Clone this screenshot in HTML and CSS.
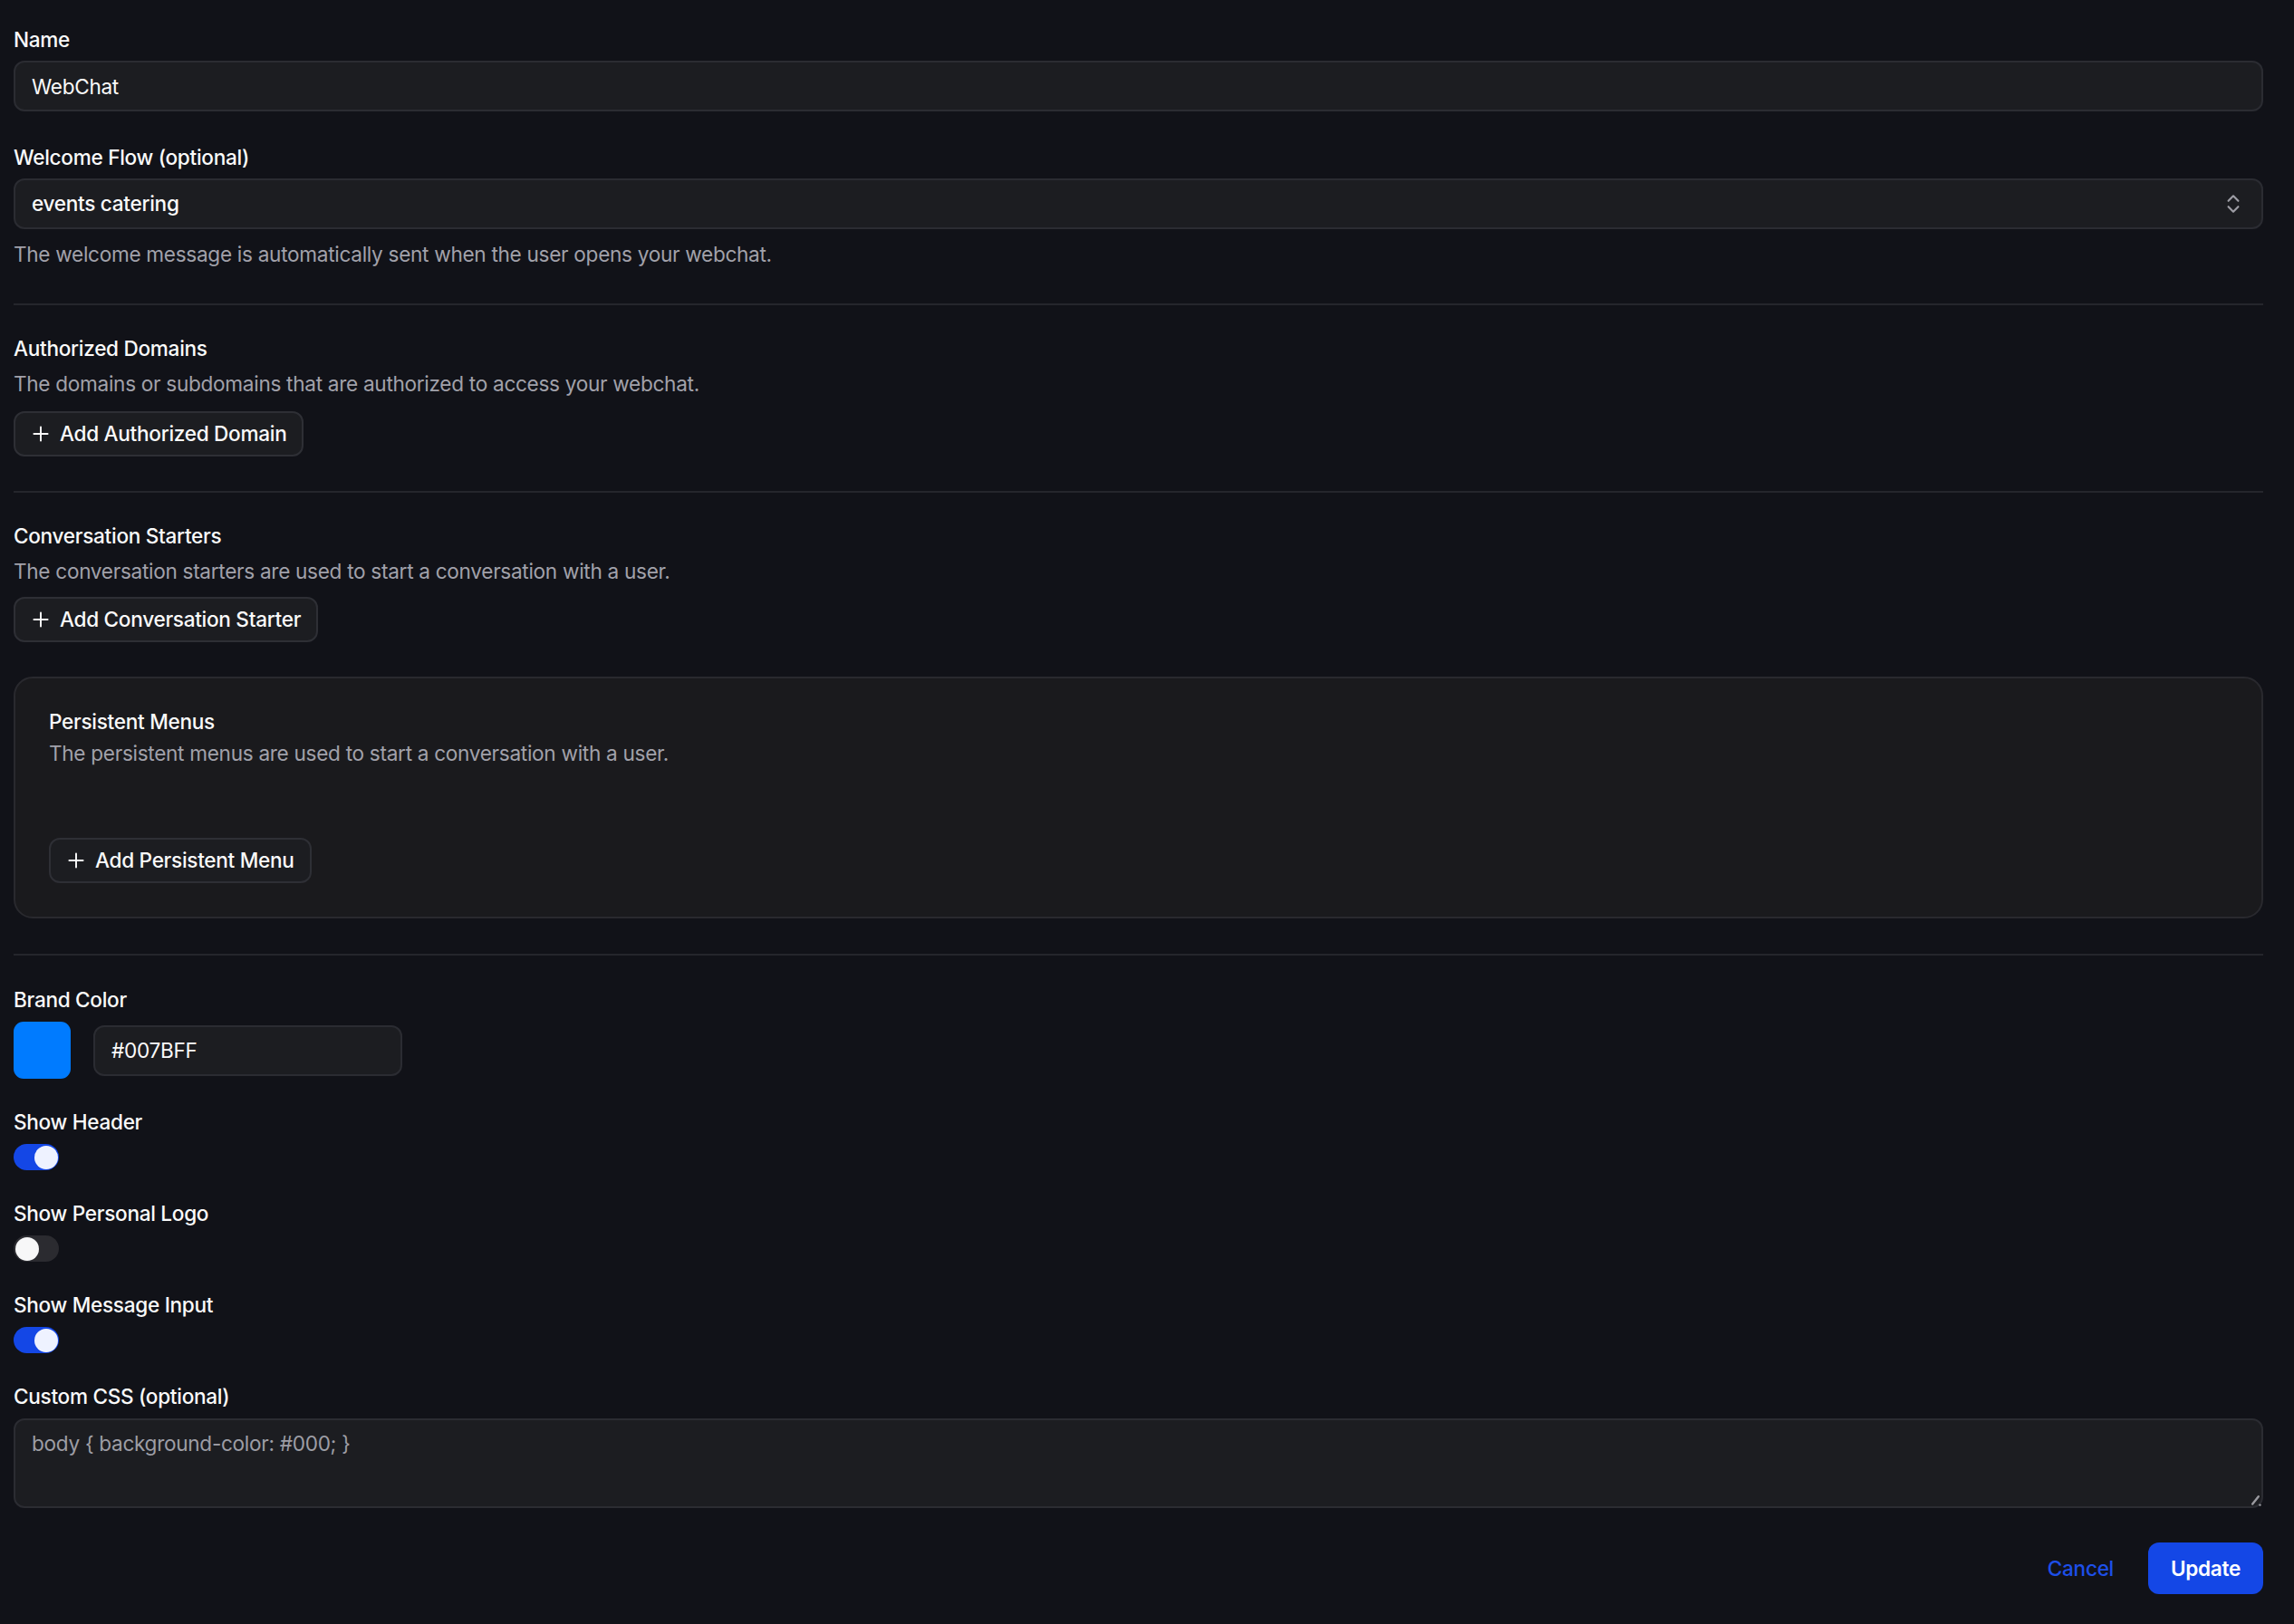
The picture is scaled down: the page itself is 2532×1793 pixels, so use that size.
FILE: index.html
```html
<!DOCTYPE html>
<html lang="en">
<head>
<meta charset="utf-8">
<title>WebChat settings</title>
<link rel="stylesheet" href="styles.css">
</head>
<body>
<form class="form">
  <div class="field">
    <label class="label" for="name">Name</label>
    <input class="input" id="name" type="text" value="WebChat">
  </div>

  <div class="field field-gap">
    <label class="label" for="flow">Welcome Flow (optional)</label>
    <div class="select">
      <span class="select-value">events catering</span>
      <svg class="select-icon" viewBox="0 0 24 24" fill="none" stroke="currentColor" stroke-width="2" stroke-linecap="round" stroke-linejoin="round"><path d="m7 15 5 5 5-5"/><path d="m7 9 5-5 5 5"/></svg>
    </div>
    <p class="help">The welcome message is automatically sent when the user opens your webchat.</p>
  </div>

  <hr class="divider">

  <section class="section">
    <h3 class="title">Authorized Domains</h3>
    <p class="desc">The domains or subdomains that are authorized to access your webchat.</p>
    <button type="button" class="btn-outline">
      <svg class="plus" viewBox="0 0 24 24" fill="none" stroke="currentColor" stroke-width="1.8" stroke-linecap="round"><path d="M5 12h14"/><path d="M12 5v14"/></svg>
      Add Authorized Domain
    </button>
  </section>

  <hr class="divider">

  <section class="section">
    <h3 class="title">Conversation Starters</h3>
    <p class="desc">The conversation starters are used to start a conversation with a user.</p>
    <button type="button" class="btn-outline btn-tight">
      <svg class="plus" viewBox="0 0 24 24" fill="none" stroke="currentColor" stroke-width="1.8" stroke-linecap="round"><path d="M5 12h14"/><path d="M12 5v14"/></svg>
      Add Conversation Starter
    </button>
  </section>

  <section class="card">
    <h3 class="title card-title">Persistent Menus</h3>
    <p class="desc">The persistent menus are used to start a conversation with a user.</p>
    <div class="card-list"></div>
    <button type="button" class="btn-outline">
      <svg class="plus" viewBox="0 0 24 24" fill="none" stroke="currentColor" stroke-width="1.8" stroke-linecap="round"><path d="M5 12h14"/><path d="M12 5v14"/></svg>
      Add Persistent Menu
    </button>
  </section>

  <hr class="divider divider-after-card">

  <div class="field">
    <label class="label" for="hex">Brand Color</label>
    <div class="color-row">
      <span class="swatch"></span>
      <input class="input hex" id="hex" type="text" value="#007BFF">
    </div>
  </div>

  <div class="field toggle-field">
    <span class="label">Show Header</span>
    <span class="toggle on"><span class="knob"></span></span>
  </div>

  <div class="field toggle-field">
    <span class="label">Show Personal Logo</span>
    <span class="toggle"><span class="knob"></span></span>
  </div>

  <div class="field toggle-field">
    <span class="label">Show Message Input</span>
    <span class="toggle on"><span class="knob"></span></span>
  </div>

  <div class="field toggle-field">
    <label class="label" for="css">Custom CSS (optional)</label>
    <div class="textarea-wrap">
      <textarea class="textarea" id="css" placeholder="body { background-color: #000; }"></textarea>
      <svg class="grip" viewBox="0 0 16 16" fill="none" stroke="currentColor" stroke-width="2.4" stroke-linecap="round"><path d="M10.8 3.2 4.2 11.6"/><path d="M12.4 12.6h0.1"/></svg>
    </div>
  </div>

  <div class="actions">
    <button type="button" class="btn-link">Cancel</button>
    <button type="button" class="btn-primary">Update</button>
  </div>
</form>
</body>
</html>
```

FILE: styles.css
```css
html {
  background: #111218;
}
body {
  margin: 0;
  padding: 28px 34px 32px 15px;
  font-family: Inter, "Noto Sans", sans-serif;
  font-size: 22.6px;
  line-height: 32px;
  letter-spacing: -0.3px;
  color: #fafafa;
}
.form {
  display: flex;
  flex-direction: column;
}
.field {
  display: flex;
  flex-direction: column;
}
.field-gap {
  margin-top: 35px;
}
.label {
  font-weight: 500;
  margin-bottom: 7px;
}
.input {
  box-sizing: border-box;
  height: 56px;
  background: #1c1d21;
  border: 2px solid #2b2c32;
  border-radius: 12px;
  padding: 0 18px;
  font: inherit;
  letter-spacing: inherit;
  color: #fafafa;
  outline: none;
}
.select {
  box-sizing: border-box;
  height: 56px;
  display: flex;
  align-items: center;
  justify-content: space-between;
  background: #1c1d21;
  border: 2px solid #2b2c32;
  border-radius: 12px;
  padding: 0 18px 0 18px;
}
.select-value {
  font-weight: 500;
}
.select-icon {
  width: 26px;
  height: 26px;
  color: #9d9da5;
}
.help {
  margin: 12px 0 0;
  color: #a1a1aa;
}
.divider {
  border: 0;
  height: 2px;
  background: #25262c;
  margin: 38px 0 32px;
}
.divider-after-card {
  margin-top: 39px;
  margin-bottom: 33px;
}
.section {
  display: flex;
  flex-direction: column;
  align-items: flex-start;
}
.title {
  margin: 0 0 7px;
  font-size: 22.6px;
  font-weight: 500;
  line-height: 32px;
}
.desc {
  margin: 0;
  color: #a1a1aa;
}
.btn-outline {
  box-sizing: border-box;
  height: 50px;
  margin-top: 14px;
  display: inline-flex;
  align-items: center;
  gap: 8px;
  padding: 0 17px 0 15px;
  background: #1c1d21;
  border: 2px solid #2e2f35;
  border-radius: 12px;
  font: inherit;
  letter-spacing: inherit;
  font-weight: 500;
  color: #fafafa;
}
.btn-tight {
  margin-top: 12px;
}
.plus {
  width: 26px;
  height: 26px;
}
.card {
  margin-top: 38px;
  display: flex;
  flex-direction: column;
  align-items: flex-start;
  background: #1a1a1d;
  border: 2px solid #29292e;
  border-radius: 21px;
  padding: 32px 37px 37px;
}
.card-title {
  margin-bottom: 3px;
}
.card-list {
  height: 63px;
}
.card .btn-outline {
  margin-top: 14px;
}
.color-row {
  display: flex;
  align-items: center;
  gap: 25px;
  margin-top: 1px;
}
.swatch {
  width: 63px;
  height: 63px;
  border-radius: 11px;
  background: #007bff;
}
.hex {
  width: 341px;
}
.toggle-field {
  margin-top: 32px;
}
.toggle-field .label {
  margin-bottom: 8px;
}
.toggle {
  box-sizing: border-box;
  width: 50px;
  height: 29px;
  border-radius: 15px;
  background: #2b2b30;
  padding: 1.5px;
  display: flex;
}
.toggle.on {
  background: #1447e6;
  justify-content: flex-end;
}
.knob {
  width: 26px;
  height: 26px;
  border-radius: 50%;
  background: #f7f7f8;
}
.toggle.on .knob {
  background: #eef2ff;
}
.textarea-wrap {
  position: relative;
  display: flex;
}
.textarea {
  box-sizing: border-box;
  flex: 1;
  height: 99px;
  background: #1c1d21;
  border: 2px solid #2b2c32;
  border-radius: 12px;
  padding: 10px 18px;
  font: inherit;
  letter-spacing: inherit;
  color: #fafafa;
  resize: none;
  outline: none;
}
.textarea::placeholder {
  color: #9d9da5;
}
.grip {
  position: absolute;
  right: 0;
  bottom: 0;
  width: 16px;
  height: 16px;
  color: #9a9aa0;
}
.actions {
  margin-top: 38px;
  display: flex;
  justify-content: flex-end;
  align-items: center;
  gap: 18px;
}
.btn-link {
  height: 57px;
  padding: 0 20px;
  background: none;
  border: 0;
  font: inherit;
  letter-spacing: inherit;
  font-weight: 500;
  color: #1d4fe8;
}
.btn-primary {
  box-sizing: border-box;
  height: 57px;
  width: 127px;
  background: #1447e6;
  border: 0;
  border-radius: 12px;
  font: inherit;
  letter-spacing: inherit;
  font-weight: 600;
  color: #ffffff;
}
```
